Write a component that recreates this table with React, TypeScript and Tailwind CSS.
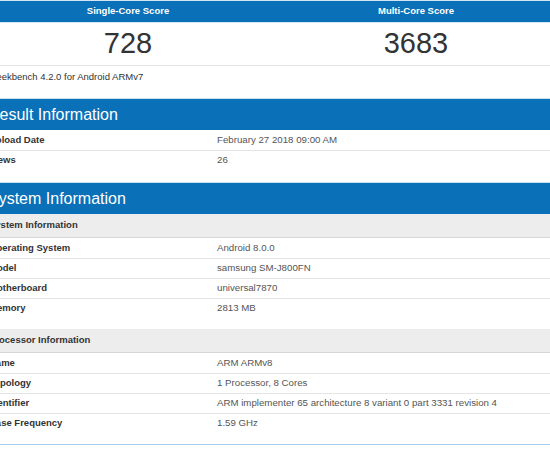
import { Fragment } from "react";

type Row = { label: string, value: string }

const resultRows: Row[] = [
  { label: 'Upload Date', value: 'February 27 2018 09:00 AM' },
  { label: 'Views', value: '26' },
]

const systemRows: Row[] = [
  { label: 'Operating System', value: 'Android 8.0.0' },
  { label: 'Model', value: 'samsung SM-J800FN' },
  { label: 'Motherboard', value: 'universal7870' },
  { label: 'Memory', value: '2813 MB' },
]

const processorRows: Row[] = [
  { label: 'Name', value: 'ARM ARMv8' },
  { label: 'Topology', value: '1 Processor, 8 Cores' },
  { label: 'Identifier', value: 'ARM implementer 65 architecture 8 variant 0 part 3331 revision 4' },
  { label: 'Base Frequency', value: '1.59 GHz' },
]

function SectionHeader(props: { title: string }) {
  return (
    <div className="border-t border-[#c9e0f0] bg-[#0a70b7] h-[32px] flex items-center pl-[4px] text-[16px] text-white">
      {props.title}
    </div>
  )
}

function SubHeader(props: { title: string }) {
  return (
    <div className="bg-[#ededed] h-[24px] border-b border-[#d6d6d6] flex items-center pl-[5px] text-[9.5px] font-bold text-[#333]">
      {props.title}
    </div>
  )
}

function InfoRows(props: { rows: Row[] }) {
  return (
    <div>
      {
        props.rows.map(function(row, i) {
          return (
            <div
              key={row.label}
              className={i === 0 ? "grid grid-cols-[231px_1fr] h-[20px] items-center" : "grid grid-cols-[231px_1fr] h-[20px] items-center border-t border-[#e4e4e4]"}
            >
              <div className="pl-[5px] font-bold text-[9.5px] text-[#333] whitespace-nowrap">{row.label}</div>
              <div className="pl-[2px] text-[9.7px] text-[#555] whitespace-nowrap">{row.value}</div>
            </div>
          )
        })
      }
    </div>
  )
}

export default function App() {
  return (
    <div className="w-[550px] h-[449px] overflow-hidden bg-white font-['Liberation_Sans',Arial,sans-serif] text-[10px]">
      <div className="-ml-[16px] w-[576px]">
        {/* score table */}
        <div className="grid grid-cols-2 border-t border-[#d3e5f2]">
          <div className="bg-[#0a70b7] h-[21px] flex items-center justify-center text-white font-bold text-[9.5px]">Single-Core Score</div>
          <div className="bg-[#0a70b7] h-[21px] flex items-center justify-center text-white font-bold text-[9.5px]">Multi-Core Score</div>
        </div>
        <div className="grid grid-cols-2 border-t border-[#d2e7f5] border-b border-b-[#e3e3e3]">
          <div className="h-[42px] flex items-center justify-center text-[29px] text-[#333]">728</div>
          <div className="h-[42px] flex items-center justify-center text-[29px] text-[#333]">3683</div>
        </div>
        <div className="h-[32px] pl-[5px] pt-[4px] text-[9.5px] text-[#333] whitespace-nowrap">Geekbench 4.2.0 for Android ARMv7</div>

        <SectionHeader title="Result Information" />
        <InfoRows rows={resultRows} />
        <div className="h-[12px]" />

        <SectionHeader title="System Information" />
        {
          [{ title: 'System Information', rows: systemRows }, { title: 'Processor Information', rows: processorRows }].map(function(group) {
            return (
              <Fragment key={group.title}>
                <SubHeader title={group.title} />
                <InfoRows rows={group.rows} />
                <div className="h-[11px]" />
              </Fragment>
            )
          })
        }
        <div className="border-t border-[#a9cde8] h-[8px]" />
      </div>
    </div>
  )
}
